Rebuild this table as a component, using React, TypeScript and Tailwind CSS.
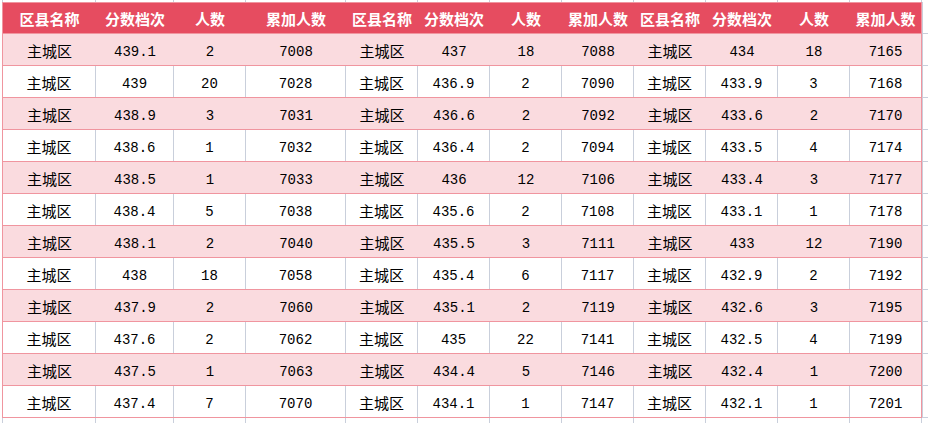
const widths = ["w-[93px]", "w-[78px]", "w-[72px]", "w-[100px]", "w-[72px]", "w-[72px]", "w-[72px]", "w-[72px]", "w-[72px]", "w-[72px]", "w-[72px]", "w-[72px]"];

const headers = ["区县名称", "分数档次", "人数", "累加人数", "区县名称", "分数档次", "人数", "累加人数", "区县名称", "分数档次", "人数", "累加人数"];

const data: [string, string, string][][] = [
  [["439.1", "2", "7008"], ["437", "18", "7088"], ["434", "18", "7165"]],
  [["439", "20", "7028"], ["436.9", "2", "7090"], ["433.9", "3", "7168"]],
  [["438.9", "3", "7031"], ["436.6", "2", "7092"], ["433.6", "2", "7170"]],
  [["438.6", "1", "7032"], ["436.4", "2", "7094"], ["433.5", "4", "7174"]],
  [["438.5", "1", "7033"], ["436", "12", "7106"], ["433.4", "3", "7177"]],
  [["438.4", "5", "7038"], ["435.6", "2", "7108"], ["433.1", "1", "7178"]],
  [["438.1", "2", "7040"], ["435.5", "3", "7111"], ["433", "12", "7190"]],
  [["438", "18", "7058"], ["435.4", "6", "7117"], ["432.9", "2", "7192"]],
  [["437.9", "2", "7060"], ["435.1", "2", "7119"], ["432.6", "3", "7195"]],
  [["437.6", "2", "7062"], ["435", "22", "7141"], ["432.5", "4", "7199"]],
  [["437.5", "1", "7063"], ["434.4", "5", "7146"], ["432.4", "1", "7200"]],
  [["437.4", "7", "7070"], ["434.1", "1", "7147"], ["432.1", "1", "7201"]],
];

const cjk = "font-['Noto_Sans_CJK_SC',sans-serif]";
const mono = "font-['Liberation_Mono','DejaVu_Sans_Mono',monospace]";

// blank spreadsheet strip with gray gridlines only
const GridStrip = ({ h }: { h: string }) => (
  <div className={`flex ${h}`}>
    <div className="w-[3px] border-r border-[#c9cfdb]" />
    {widths.map((w, i) => (
      <div key={i} className={`${w} shrink-0 border-r border-[#c9cfdb]`} />
    ))}
    <div className="flex-1" />
  </div>
);

const App = () => {
  return (
    <div className="w-[928px] h-[423px] overflow-hidden bg-white">
      <GridStrip h="h-[2px]" />

      <div className="flex">
        <div className="w-[2px] shrink-0" />
        <div className="border-t border-l border-[#f0959f]">
          {/* header */}
          <div className="flex h-[31px] bg-[#e64c60] border-b border-[#f0959f]">
            {headers.map((t, i) => (
              <div
                key={i}
                className={`${widths[i]} shrink-0 flex items-center justify-center ${cjk} text-[15px] leading-none font-bold text-white ${i === 11 ? "border-r border-[#f0959f]" : ""}`}
              >
                {t}
              </div>
            ))}
          </div>

          {data.map((row, r) => {
            const pink = r % 2 === 0;
            const cells: string[] = row.flatMap((g) => ["主城区", ...g]);
            return (
              <div
                key={r}
                className={`flex h-[32px] border-b border-[#f0959f] ${pink ? "bg-[#fadbdf]" : "bg-white"}`}
              >
                {cells.map((t, i) => {
                  const edge = i === 11 ? "border-r border-[#f0959f]" : pink ? "" : "border-r border-[#c9cfdb]";
                  return (
                    <div
                      key={i}
                      className={`${widths[i]} shrink-0 flex items-center justify-center text-black leading-none ${edge} ${
                        i % 4 === 0 ? `${cjk} text-[15px] pt-[2px]` : `${mono} text-[14px] pt-[4px]`
                      }`}
                    >
                      {t}
                    </div>
                  );
                })}
              </div>
            );
          })}
        </div>

        {/* filler past the table edge */}
        <div className="flex-1 border-l border-[#c9cfdb]">
          {Array.from({ length: 13 }).map((_, i) => (
            <div key={i} className="h-[32px] border-b border-[#c9cfdb]" />
          ))}
        </div>
      </div>

      <GridStrip h="h-[6px]" />
    </div>
  );
};

export default App;
